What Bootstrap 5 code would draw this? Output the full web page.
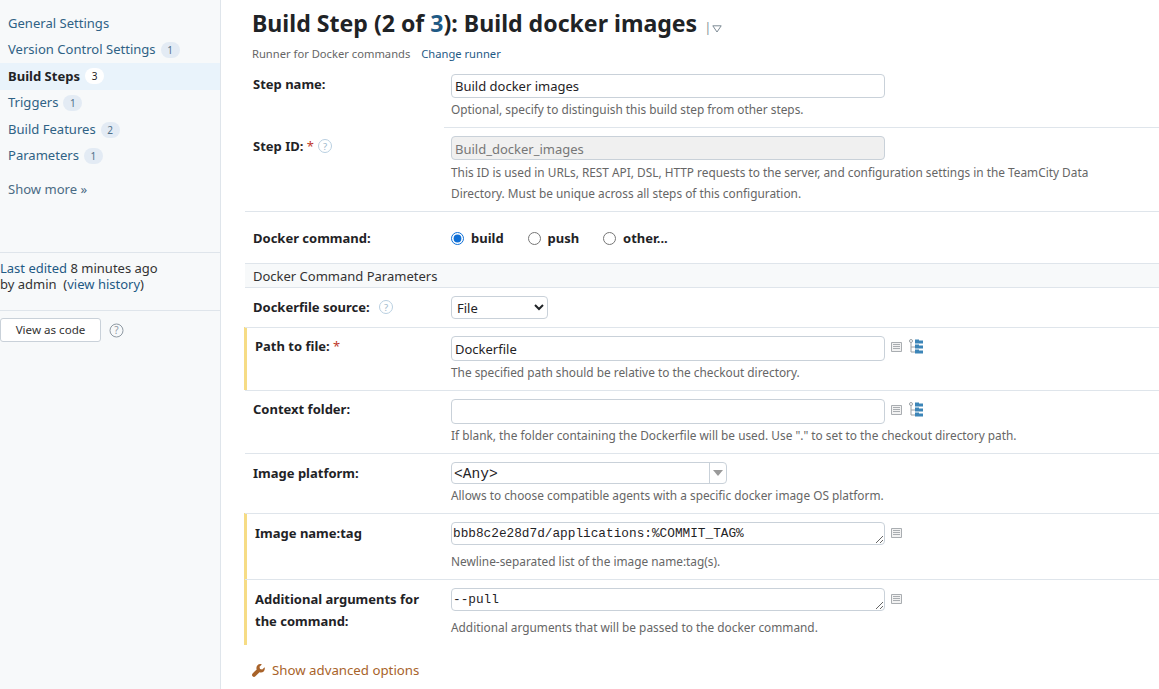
<!DOCTYPE html>
<html lang="en">
<head>
    <meta charset="UTF-8">
    <title>Build Step: Build docker images</title>
    <link href="https://cdn.jsdelivr.net/npm/bootstrap@5.3.0/dist/css/bootstrap.min.css" rel="stylesheet">
    <style>
        body {
            font-family: "Noto Sans", "Open Sans", sans-serif;
            font-size: 13px;
            color: #1f2326;
            background: #fff;
            height: 689px;
            overflow: hidden;
        }

        a { color: #1f5a85; text-decoration: none; }

        .side-bar {
            width: 221px;
            height: 689px;
            flex: none;
            background: #f7f9fa;
            border-right: 1px solid #dfe5eb;
        }

        .side-nav { padding-top: 10px; }
        .side-link {
            display: flex;
            align-items: center;
            height: 26.6px;
            padding-left: 8px;
            font-size: 13.05px;
            color: #2f6285;
        }
        .side-link.active {
            background: #e9f3fb;
            color: #1f2326;
            font-weight: 700;
        }
        .side-count {
            display: inline-block;
            min-width: 19px;
            height: 16px;
            line-height: 16px;
            margin-left: 5px;
            padding: 0 5px;
            border-radius: 8px;
            background: #e3ebf4;
            color: #50708a;
            font-size: 10px;
            font-weight: 400;
            text-align: center;
        }
        .side-link.active .side-count { background: #fff; color: #1f2326; }
        .show-more {
            display: block;
            padding: 10px 0 0 8px;
            font-size: 13.05px;
            color: #4a6b84;
        }
        .edit-info {
            margin-top: 53px;
            padding: 7px 0 18px;
            border-top: 1px solid #dfe5eb;
            border-bottom: 1px solid #dfe5eb;
            line-height: 16px;
            color: #333;
        }
        .code-row { padding-top: 7px; }
        .code-btn {
            width: 101px;
            height: 24px;
            padding: 0;
            font-size: 11.6px;
            color: #333;
            background: #fff;
            border: 1px solid #c9d1d9;
            border-radius: 3px;
        }

        .main-pane { width: 938px; flex: none; padding-left: 24px; }
        .step-head { padding: 6px 0 0 7px; height: 70px; }
        .step-title { font-size: 23.1px; font-weight: 700; line-height: 34px; margin: 0; color: #1f2326; }
        .step-title a { color: #1f5a85; }
        .title-menu { color: #8a949c; font-size: 13px; font-weight: 400; margin-left: 1px; }
        .title-menu svg { margin-left: 1px; }
        .step-sub { font-size: 11.2px; color: #666; margin-top: 2px; line-height: 16px; }
        .step-sub a { margin-left: 8px; }

        .step-row { display: flex; border-top: 1px solid #dfe5eb; }
        .step-row.no-line { border-top: 0; }
        .step-row.marked { box-shadow: -1px 0 0 #f6dc85, inset 2px 0 0 #f6dc85; }
        .row-label {
            width: 206px;
            flex: none;
            padding: 8px 20px 0 8px;
            font-weight: 700;
            line-height: 22px;
        }
        .step-row.marked .row-label { padding-left: 10px; }
        .row-field { flex: 1; min-width: 0; padding-top: 8px; }
        .req { color: #c0392b; font-weight: 400; }
        .hint-mark { vertical-align: -2px; }
        .hint-id { margin-left: 1px; }
        .hint-source { margin-left: 6px; }

        /* row heights as measured in the reference */
        .row-name { height: 57px; }
        .row-id { height: 84px; }
        .row-command { height: 52px; }
        .row-source { height: 39px; }
        .row-path { height: 63px; }
        .row-platform { height: 60px; }
        .row-tag { height: 66px; }
        .row-name .row-label { padding-top: 3px; }
        .row-name .row-field { padding-top: 4px; }
        .row-command .row-label { padding-top: 15px; }
        .row-command .row-field { padding-top: 17px; }
        .row-path .row-label { padding-top: 7px; }

        .text-box {
            display: block;
            width: 434px;
            height: 24px;
            padding: 0 3px;
            font-size: 13px;
            color: #1f2326;
            border: 1px solid #c9d1d9;
            border-radius: 4px;
            outline: 0;
        }
        .text-box:disabled { background: #f0f0f0; color: #777; padding-top: 1px; }
        .row-path .text-box { height: 25px; padding-top: 1px; }
        .mono-box {
            height: 23px;
            padding: 2px 1px 0;
            font-family: "Liberation Mono", monospace;
            font-size: 12.75px;
            line-height: 18px;
            resize: both;
            overflow: hidden;
        }
        .field-line { display: flex; align-items: flex-start; }
        .field-icon { margin: 6px 0 0 6px; flex: none; }
        .tree-icon { margin: 3px 0 0 7px; flex: none; }
        .help-text { font-size: 11.85px; line-height: 20px; color: #666; margin-top: 1px; }
        .row-tag .help-text { margin-top: 6px; }

        .step-id-field { border-top: 1px solid #dfe5eb; margin-left: -7px; padding: 8px 0 0 7px; }
        .help-wide { width: 660px; line-height: 21px; margin-top: 2px; }

        .radio-item { display: inline-flex; align-items: center; margin-right: 20.5px; font-weight: 700; }
        .radio-item input { width: 13px; height: 13px; margin: 0 7px 0 0; accent-color: #0f6fd6; }

        .group-head {
            height: 25px;
            line-height: 24px;
            padding-left: 8px;
            background: #f7f9fa;
            border-top: 1px solid #dfe5eb;
            border-bottom: 1px solid #dfe5eb;
            color: #333;
        }
        .small-select {
            width: 97px;
            height: 23px;
            font-size: 13px;
            padding: 0 0 0 1px;
            color: #1f2326;
            border: 1px solid #c9d1d9;
            border-radius: 4px;
            background: #fff;
        }
        .combo {
            display: flex;
            width: 276px;
            height: 22px;
            border: 1px solid #c9d1d9;
            border-radius: 4px;
            font-family: "Liberation Mono", monospace;
            font-size: 14.6px;
            line-height: 22px;
            padding-left: 2px;
        }
        .combo-value { flex: 1; }
        .combo-arrow {
            width: 17px;
            border-left: 1px solid #c9d1d9;
            position: relative;
        }
        .combo-arrow::after {
            content: "";
            position: absolute;
            left: 3px;
            top: 7px;
            border: 5px solid transparent;
            border-top: 6px solid #9a9a9a;
            border-bottom: 0;
        }
        .advanced-link { display: flex; align-items: center; gap: 7px; padding: 16px 0 0 7px; color: #a8632a; font-size: 13.25px; }
    </style>
</head>
<body>
    <div class="d-flex">
        <!-- sidebar -->
        <div class="side-bar">
            <div class="side-nav">
                <a class="side-link" href="#">General Settings</a>
                <a class="side-link" href="#">Version Control Settings <span class="side-count">1</span></a>
                <a class="side-link active" href="#">Build Steps <span class="side-count">3</span></a>
                <a class="side-link" href="#">Triggers <span class="side-count">1</span></a>
                <a class="side-link" href="#">Build Features <span class="side-count">2</span></a>
                <a class="side-link" href="#">Parameters <span class="side-count">1</span></a>
            </div>
            <a class="show-more" href="#">Show more »</a>
            <div class="edit-info">
                <a href="#">Last edited</a> 8 minutes ago<br>
                by admin &nbsp;(<a href="#">view history</a>)
            </div>
            <div class="code-row d-flex align-items-center">
                <button class="code-btn" type="button">View as code</button>
                <svg class="ms-2" width="15" height="15" viewBox="0 0 15 15"><circle cx="7.5" cy="7.5" r="6.5" fill="none" stroke="#8f9aa3"/><text x="7.5" y="11" text-anchor="middle" font-size="10" fill="#8f9aa3">?</text></svg>
            </div>
        </div>

        <!-- main form -->
        <div class="main-pane">
            <div class="step-head">
                <h1 class="step-title">Build Step (2 of <a href="#">3</a>): Build docker images <span class="title-menu">|<svg width="10" height="8" viewBox="0 0 10 8"><path d="M.8.8h8.400L5 7z" fill="none" stroke="#7d8a94"/></svg></span></h1>
                <div class="step-sub">Runner for Docker commands <a href="#">Change runner</a></div>
            </div>

            <div class="step-row no-line row-name">
                <div class="row-label">Step name:</div>
                <div class="row-field">
                    <input class="text-box" type="text" value="Build docker images">
                    <div class="help-text">Optional, specify to distinguish this build step from other steps.</div>
                </div>
            </div>

            <div class="step-row no-line row-id">
                <div class="row-label">Step ID: <span class="req">*</span>
                    <svg class="hint-mark hint-id" width="14" height="14" viewBox="0 0 14 14"><circle cx="7" cy="7" r="6.500" fill="none" stroke="#b9cfe0"/><text x="7" y="10.500" text-anchor="middle" font-size="9.500" font-weight="400" fill="#9db7cb">?</text></svg>
                </div>
                <div class="row-field step-id-field">
                    <input class="text-box" type="text" value="Build_docker_images" disabled>
                    <div class="help-text help-wide">This ID is used in URLs, REST API, DSL, HTTP requests to the server, and configuration settings in the TeamCity Data Directory. Must be unique across all steps of this configuration.</div>
                </div>
            </div>

            <div class="step-row row-command">
                <div class="row-label">Docker command:</div>
                <div class="row-field">
                    <label class="radio-item"><input type="radio" name="cmd" checked>build</label>
                    <label class="radio-item"><input type="radio" name="cmd">push</label>
                    <label class="radio-item"><input type="radio" name="cmd">other...</label>
                </div>
            </div>

            <div class="group-head">Docker Command Parameters</div>

            <div class="step-row no-line row-source">
                <div class="row-label">Dockerfile source:
                    <svg class="hint-mark hint-source" width="14" height="14" viewBox="0 0 14 14"><circle cx="7" cy="7" r="6.500" fill="none" stroke="#b9cfe0"/><text x="7" y="10.500" text-anchor="middle" font-size="9.500" font-weight="400" fill="#9db7cb">?</text></svg>
                </div>
                <div class="row-field">
                    <select class="small-select"><option>File</option></select>
                </div>
            </div>

            <div class="step-row marked row-path">
                <div class="row-label">Path to file: <span class="req">*</span></div>
                <div class="row-field">
                    <div class="field-line">
                        <input class="text-box" type="text" value="Dockerfile">
                        <svg class="field-icon" width="11" height="10" viewBox="0 0 11 10"><path d="M.5.5h10v9H.5zM2 2.500h7M2 4.500h7M2 6.500h7" fill="#f2f2f2" stroke="#a9adb1"/></svg>
                        <svg class="tree-icon" width="14" height="15" viewBox="0 0 14 15"><path d="M2 3.500V13h4M2 8h4" fill="none" stroke="#9aa0a5"/><circle cx="2" cy="2" r="1.500" fill="none" stroke="#9aa0a5"/><path d="M6 .5h4v1h4v3H6zM6 5.500h4v1h4v3H6zM6 10.500h4v1h4v3H6z" fill="#3c85b8"/></svg>
                    </div>
                    <div class="help-text">The specified path should be relative to the checkout directory.</div>
                </div>
            </div>

            <div class="step-row row-path">
                <div class="row-label">Context folder:</div>
                <div class="row-field">
                    <div class="field-line">
                        <input class="text-box" type="text">
                        <svg class="field-icon" width="11" height="10" viewBox="0 0 11 10"><path d="M.5.5h10v9H.5zM2 2.500h7M2 4.500h7M2 6.500h7" fill="#f2f2f2" stroke="#a9adb1"/></svg>
                        <svg class="tree-icon" width="14" height="15" viewBox="0 0 14 15"><path d="M2 3.500V13h4M2 8h4" fill="none" stroke="#9aa0a5"/><circle cx="2" cy="2" r="1.500" fill="none" stroke="#9aa0a5"/><path d="M6 .5h4v1h4v3H6zM6 5.500h4v1h4v3H6zM6 10.500h4v1h4v3H6z" fill="#3c85b8"/></svg>
                    </div>
                    <div class="help-text">If blank, the folder containing the Dockerfile will be used. Use "." to set to the checkout directory path.</div>
                </div>
            </div>

            <div class="step-row row-platform">
                <div class="row-label">Image platform:</div>
                <div class="row-field">
                    <div class="combo"><span class="combo-value">&lt;Any&gt;</span><span class="combo-arrow"></span></div>
                    <div class="help-text">Allows to choose compatible agents with a specific docker image OS platform.</div>
                </div>
            </div>

            <div class="step-row marked row-tag">
                <div class="row-label">Image name:tag</div>
                <div class="row-field">
                    <div class="field-line">
                        <textarea class="text-box mono-box" rows="1">bbb8c2e28d7d/applications:%COMMIT_TAG%</textarea>
                        <svg class="field-icon" width="11" height="10" viewBox="0 0 11 10"><path d="M.5.5h10v9H.5zM2 2.500h7M2 4.500h7M2 6.500h7" fill="#f2f2f2" stroke="#a9adb1"/></svg>
                    </div>
                    <div class="help-text">Newline-separated list of the image name:tag(s).</div>
                </div>
            </div>

            <div class="step-row marked row-tag">
                <div class="row-label">Additional arguments for the command:</div>
                <div class="row-field">
                    <div class="field-line">
                        <textarea class="text-box mono-box" rows="1">--pull</textarea>
                        <svg class="field-icon" width="11" height="10" viewBox="0 0 11 10"><path d="M.5.5h10v9H.5zM2 2.500h7M2 4.500h7M2 6.500h7" fill="#f2f2f2" stroke="#a9adb1"/></svg>
                    </div>
                    <div class="help-text">Additional arguments that will be passed to the docker command.</div>
                </div>
            </div>

            <a class="advanced-link" href="#">
                <svg width="13" height="13" viewBox="0 0 13 13"><path d="M12.6 3.200 10.200 5.500 8 5 7.500 2.800 9.800.4C8.300-.2 6.600.1 5.500 1.200 4.400 2.300 4.100 4 4.700 5.400L.6 9.500c-.8.800-.8 2 0 2.800.8.800 2 .8 2.800 0l4.100-4.100c1.400.6 3.100.3 4.200-.8 1.100-1.100 1.400-2.800.9-4.200z" fill="#a8632a"/></svg>
                Show advanced options
            </a>
        </div>
    </div>
    <script src="https://cdn.jsdelivr.net/npm/bootstrap@5.3.0/dist/js/bootstrap.bundle.min.js"></script>
</body>
</html>
